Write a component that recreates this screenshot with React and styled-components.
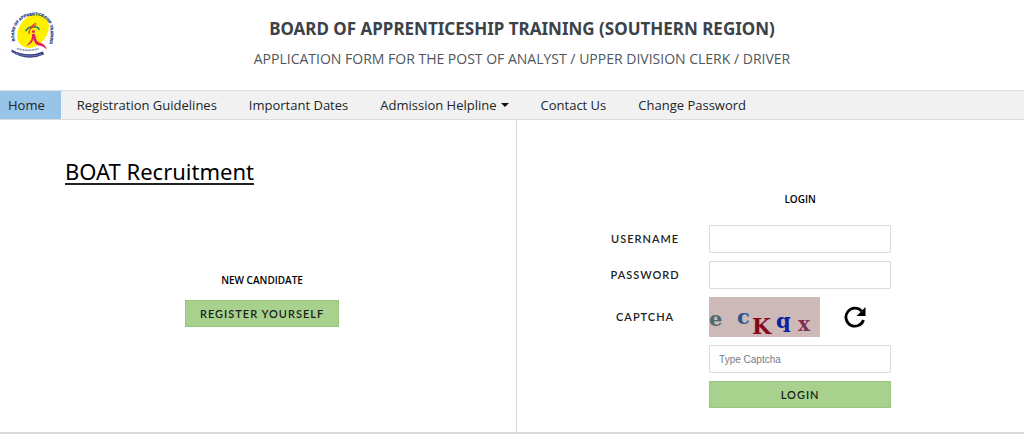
import React from 'react';
import styled, { createGlobalStyle } from 'styled-components';

const GlobalStyle = createGlobalStyle`
  *, *::before, *::after { box-sizing: border-box; }
  body {
    margin: 0;
    background: #fff;
    color: #212529;
    font-family: "Open Sans", "Noto Sans", sans-serif;
  }
  h1, h2, h3, p { margin: 0; }
`;

const Header = styled.header`
  display: grid;
  grid-template-columns: 64px 1fr 44px;
  min-height: 90px;
`;

const Logo = styled.svg`
  width: 48px;
  height: 52px;
  margin: 10px 0 0 9px;
  overflow: visible;
`;

const Titles = styled.div`
  padding-top: 16px;
  text-align: center;
  color: #3b4248;
`;

const Title = styled.h1`
  font-family: "Noto Sans", sans-serif;
  font-size: 17px;
  line-height: 26px;
  font-weight: 700;
`;

const Subtitle = styled.p`
  margin-top: 5px;
  font-size: 14px;
  line-height: 24px;
  color: #50565b;
`;

const Nav = styled.nav`
  display: flex;
  background: #f1f1f1;
  border-top: 1px solid #dcdcdc;
  border-bottom: 1px solid #dcdcdc;
`;

const NavLink = styled.a`
  display: flex;
  align-items: center;
  padding: 0 16px;
  padding-left: ${(p) => (p.$active ? '8px' : '16px')};
  background: ${(p) => (p.$active ? '#98c4e8' : 'transparent')};
  color: #212529;
  font-size: 13px;
  line-height: 28px;
  text-decoration: none;
  white-space: nowrap;
`;

const Caret = styled.span`
  margin-left: 4px;
  border: 4px solid transparent;
  border-top-color: #111;
  border-bottom: 0;
`;

const Main = styled.main`
  display: grid;
  grid-template-columns: 101fr 99fr;
  border-bottom: 2px solid #d9dadb;
`;

const CandidatePanel = styled.section`
  display: flex;
  flex-direction: column;
  padding-top: 39px;
  border-right: 1px solid #d5d8dc;
`;

const PageHeading = styled.h2`
  align-self: flex-start;
  margin-left: 65px;
  border-bottom: 2px solid #222;
  color: #000;
  font-family: "Noto Sans", sans-serif;
  font-size: 22px;
  font-weight: 400;
  line-height: 24px;
`;

const Candidate = styled.div`
  display: flex;
  flex-direction: column;
  align-items: center;
  gap: 12px;
  margin-top: 87px;
  padding-left: 8px;
`;

const SectionTitle = styled.h3`
  color: #000;
  font-size: 10px;
  line-height: 16px;
  font-weight: 600;
  text-align: center;
`;

const Button = styled.button`
  height: 27px;
  padding: 0 14px;
  border: 1px solid #97c77c;
  background: #a8d18d;
  color: #1a211a;
  font-family: Lato, sans-serif;
  font-size: 11px;
  font-weight: 600;
  letter-spacing: 1px;
`;

const LoginPanel = styled.section`
  padding: 71px 0 24px 64px;
`;

const LoginForm = styled.form`
  display: grid;
  grid-template-columns: 128px 182px;
  row-gap: 8px;
  align-items: center;

  > :not(label) { grid-column: 2; }
  > ${SectionTitle} { margin-bottom: 10px; }
`;

const Label = styled.label`
  grid-column: 1;
  padding-bottom: 2px;
  text-align: center;
  color: #222;
  font-family: Lato, sans-serif;
  font-size: 11px;
  font-weight: 600;
  letter-spacing: 1px;
`;

const Input = styled.input`
  width: 100%;
  height: 28px;
  padding: 0 9px;
  border: 1px solid #d9dce2;
  border-radius: 1px;
  font-family: "Liberation Sans", sans-serif;
  font-size: 10px;

  &::placeholder { color: #757b82; opacity: 1; }
`;

const CaptchaRow = styled.div`
  display: flex;
  align-items: center;
  gap: 24px;
`;

const CaptchaImage = styled.svg`
  width: 111px;
  height: 40px;
  overflow: visible;
  background: #cdb9b8;
  font-family: "DejaVu Serif", serif;
  font-weight: 700;
`;

const RefreshButton = styled.button`
  display: flex;
  padding: 0;
  border: 0;
  background: none;

  svg { width: 22px; height: 22px; }
`;

function BoardLogo() {
  return (
    <Logo viewBox="0 0 48 52" role="img" aria-label="Board of Apprenticeship Training">
      <defs>
        <path id="ring-top" d="M6 31 C2 18 11 6 24 5.500 C36 4.500 43 12 41.500 27 L40 40" />
      </defs>
      <ellipse cx="24" cy="21" rx="14" ry="18.500" fill="#fff000" transform="rotate(38 24 21)" />
      <text fontFamily="Liberation Sans, sans-serif" fontWeight="700" fontSize="3.900" fill="#20397f" stroke="#20397f" strokeWidth=".2">
        <textPath href="#ring-top">BOARD OF APPRENTICESHIP TRAINING</textPath>
      </text>
      <path d="M16.500 21 Q20 16 26 17 Q30 17 30 20" fill="none" stroke="#13877e" strokeWidth="1.500" />
      <path d="M20 24 Q20 17 27 13 M21 19 L27 15" fill="none" stroke="#e5402a" strokeWidth="1.300" />
      <circle cx="24.500" cy="21.500" r="1.500" fill="#e3205c" />
      <path d="M23 24 Q24 30 17 36 Q23 34 24.500 29 Q26 35 30 35.500 Q35 36 38 40 Q36 33 30 32.500 Q27 31 26 24 Z" fill="#e5205f" />
      <path d="M8 38.500 Q19 42 30 38.500" fill="none" stroke="#7b91b5" strokeWidth="1.800" strokeDasharray="1 .5" />
      <path d="M2.500 39.500 Q18 48 34 41.500 L35 44.500 Q18 52 2.500 42 Z" fill="#35418a" />
      <path d="M5 42.500 Q19 48.500 33 44" fill="none" stroke="#c4c9df" strokeWidth=".8" strokeDasharray="1 1" />
    </Logo>
  );
}

const links = [
  { text: 'Home', active: true },
  { text: 'Registration Guidelines' },
  { text: 'Important Dates' },
  { text: 'Admission Helpline', menu: true },
  { text: 'Contact Us' },
  { text: 'Change Password' },
];

export default function App() {
  return (
    <>
      <GlobalStyle />
      <Header>
        <BoardLogo />
        <Titles>
          <Title>BOARD OF APPRENTICESHIP TRAINING (SOUTHERN REGION)</Title>
          <Subtitle>APPLICATION FORM FOR THE POST OF ANALYST / UPPER DIVISION CLERK / DRIVER</Subtitle>
        </Titles>
      </Header>
      <Nav>
        {links.map((l) => (
          <NavLink key={l.text} href="#" $active={l.active}>
            {l.text}
            {l.menu && <Caret />}
          </NavLink>
        ))}
      </Nav>
      <Main>
        <CandidatePanel>
          <PageHeading>BOAT Recruitment</PageHeading>
          <Candidate>
            <SectionTitle>NEW CANDIDATE</SectionTitle>
            <Button type="button">REGISTER YOURSELF</Button>
          </Candidate>
        </CandidatePanel>
        <LoginPanel>
          <LoginForm>
            <SectionTitle>LOGIN</SectionTitle>
            <Label htmlFor="username">USERNAME</Label>
            <Input id="username" type="text" />
            <Label htmlFor="password">PASSWORD</Label>
            <Input id="password" type="password" />
            <Label htmlFor="captcha">CAPTCHA</Label>
            <CaptchaRow>
              <CaptchaImage viewBox="0 0 111 40" role="img" aria-label="Captcha">
                <text x="0" y="29" fontSize="21" fill="#4d6a70">e</text>
                <text x="28" y="27" fontSize="21" fill="#2c5590">c</text>
                <text x="43" y="37" fontSize="22" fill="#85081a">K</text>
                <text x="67" y="31" fontSize="21" fill="#0a20a5">q</text>
                <text x="89" y="34" fontSize="20" fill="#83304f">x</text>
              </CaptchaImage>
              <RefreshButton type="button" aria-label="Refresh captcha">
                <svg viewBox="0 0 22 22">
                  <path d="M17.500 5 A9 9 0 1 0 19.500 14" fill="none" stroke="#000" strokeWidth="2.800" />
                  <path d="M21.500 1 V10 H12.500 Z" fill="#000" />
                </svg>
              </RefreshButton>
            </CaptchaRow>
            <Input id="captcha" type="text" placeholder="Type Captcha" />
            <Button type="submit">LOGIN</Button>
          </LoginForm>
        </LoginPanel>
      </Main>
    </>
  );
}
